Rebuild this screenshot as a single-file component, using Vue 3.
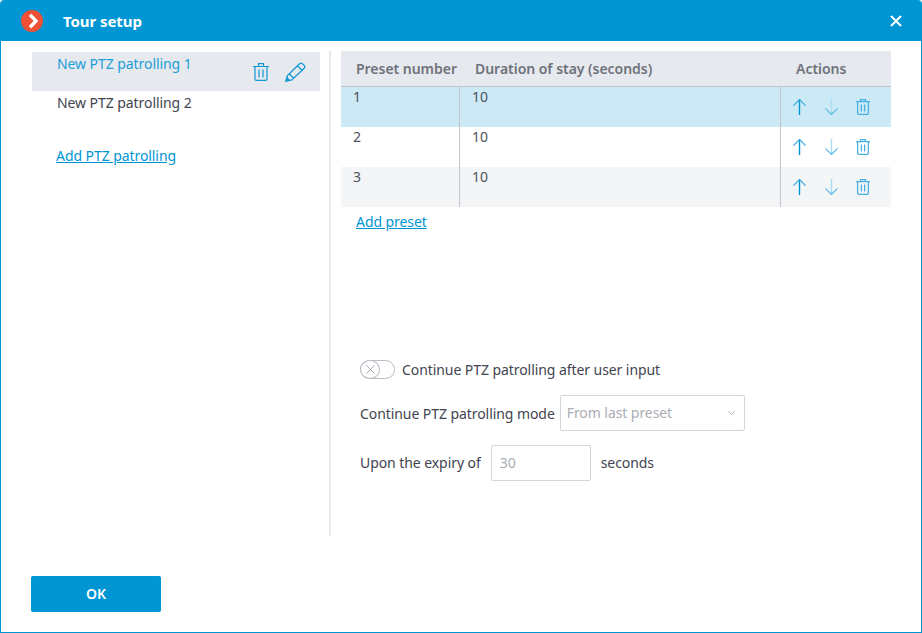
<template>
  <div class="dialog">
    <header class="titlebar">
      <span class="logo">
        <svg width="22" height="22" viewBox="0 0 22 22">
          <circle cx="11" cy="11" r="11" fill="#ee5033" />
          <path d="M9 4.8 L15 11 L9 17.2" fill="none" stroke="#fff" stroke-width="3.4" />
        </svg>
      </span>
      <span class="title">Tour setup</span>
      <svg class="close" width="12" height="12" viewBox="0 0 12 12">
        <path d="M1 1 L11 11 M11 1 L1 11" stroke="#fff" stroke-width="2" />
      </svg>
    </header>

    <div class="body">
      <aside class="left">
        <div
          v-for="(item, i) in tours"
          :key="item"
          class="tour"
          :class="{ selected: i === 0 }"
        >
          <span>{{ item }}</span>
          <div v-if="i === 0" class="tour-icons">
            <svg width="16" height="18" viewBox="0 0 16 18" fill="none" stroke="#1198d6" stroke-width="1.2">
              <path d="M0 3.5 H16 M5.5 3.5 V0.6 H10.5 V3.5 M2 3.5 V16 Q2 17.4 3.4 17.4 H12.6 Q14 17.4 14 16 V3.5 M6 6.5 V14.5 M10 6.5 V14.5" />
            </svg>
            <svg width="21" height="20" viewBox="0 0 21 20" fill="none" stroke="#1198d6" stroke-width="1.3">
              <path d="M0.8 19.3 L2.4 13.6 L14.6 1.7 Q16 0.6 17.4 1.7 L19.2 3.4 Q20.4 4.8 19.2 6.2 L6.8 18 Z M12.4 3.8 L17 8.4 M4.2 11.8 L8.6 16.2" />
              <path d="M0.8 19.3 L2 15 L5.4 18.2 Z" fill="#1198d6" stroke="none" />
            </svg>
          </div>
        </div>
        <a class="link add-tour">Add PTZ patrolling</a>
      </aside>

      <div class="divider"></div>

      <section class="right">
        <div class="grid head">
          <div class="hcell first">Preset number</div>
          <div class="hcell second">Duration of stay (seconds)</div>
          <div class="hcell third">Actions</div>
        </div>
        <div
          v-for="(row, i) in presets"
          :key="row.num"
          class="grid row"
          :class="rowClass(i)"
        >
          <div class="cell">{{ row.num }}</div>
          <div class="cell lined">{{ row.time }}</div>
          <div class="cell lined actions">
            <svg width="13" height="16" viewBox="0 0 13 16" fill="none">
              <path d="M6.5 0.5 V16" stroke="#0095d3" stroke-width="1.4" />
              <path d="M0.4 6.6 L6.5 0.5 L12.6 6.6" stroke="#3aa9de" stroke-width="1.2" />
            </svg>
            <svg width="13" height="16" viewBox="0 0 13 16" fill="none">
              <path d="M6.5 0 V15" stroke="#aadcf2" stroke-width="1.4" />
              <path d="M0.4 9.4 L6.5 15.5 L12.6 9.4" stroke="#5cbbe6" stroke-width="1.2" />
            </svg>
            <svg width="14" height="16" viewBox="0 0 14 16" fill="none" stroke="#48b1e1" stroke-width="1.3">
              <path d="M0 2.6 H14 M4.5 2.6 V0.6 H9.5 V2.6 M1.6 2.6 V14 Q1.6 15.4 3 15.4 H11 Q12.4 15.4 12.4 14 V2.6 M5.4 5.5 V12.5 M8.6 5.5 V12.5" />
            </svg>
          </div>
        </div>
        <a class="link add-preset">Add preset</a>

        <div class="options">
          <div class="opt-row switch-row">
            <span class="switch">
              <span class="knob">
                <svg width="9" height="9" viewBox="0 0 9 9">
                  <path d="M0.5 0.5 L8.5 8.5 M8.5 0.5 L0.5 8.5" stroke="#a3a7b1" stroke-width="1" />
                </svg>
              </span>
            </span>
            <span>Continue PTZ patrolling after user input</span>
          </div>
          <div class="opt-row">
            <span>Continue PTZ patrolling mode</span>
            <div class="select">
              <span class="select-text">From last preset</span>
              <svg width="7" height="4" viewBox="0 0 7 4">
                <path d="M0.3 0.3 L3.5 3.5 L6.7 0.3" fill="none" stroke="#b4b8bf" stroke-width="1" />
              </svg>
            </div>
          </div>
          <div class="opt-row expiry">
            <span class="nudge">Upon the expiry of</span>
            <div class="input">30</div>
            <span class="unit nudge">seconds</span>
          </div>
        </div>
      </section>
    </div>

    <footer class="footer">
      <button class="ok">OK</button>
    </footer>
  </div>
</template>

<script setup>
const tours = ['New PTZ patrolling 1', 'New PTZ patrolling 2']

const presets = [
  { num: 1, time: 10 },
  { num: 2, time: 10 },
  { num: 3, time: 10 }
]

const rowClass = (i) => {
  if (i === 0) return 'active'
  return i === 2 ? 'striped' : ''
}
</script>

<style>
html,
body {
  margin: 0;
  background: #fff;
}
</style>

<style scoped>
.dialog {
  width: 922px;
  height: 633px;
  box-sizing: border-box;
  display: flex;
  flex-direction: column;
  border: 1px solid #0095d3;
  border-top: none;
  border-radius: 4px 4px 0 0;
  background: #fff;
  overflow: hidden;
  font-family: "Noto Sans", "Open Sans", sans-serif;
  font-size: 14px;
  letter-spacing: -0.07px;
  color: #3f4450;
}

/* Title bar */
.titlebar {
  height: 41px;
  flex: none;
  display: flex;
  align-items: center;
  padding: 1px 19px 0 20px;
  box-sizing: border-box;
  background: #0095d3;
  color: #fff;
}

.logo {
  width: 22px;
  height: 22px;
  display: block;
}

.title {
  margin-left: 20px;
  font-weight: 700;
  font-size: 15px;
}

.close {
  margin-left: auto;
}

/* Main area */
.body {
  flex: 1;
  display: flex;
  align-items: flex-start;
  padding-top: 10px;
}

.left {
  width: 288px;
  margin: 1px 0 0 31px;
  display: flex;
  flex-direction: column;
}

.tour {
  height: 39px;
  box-sizing: border-box;
  padding: 1px 0 0 25px;
  display: flex;
  line-height: 22px;
}

.selected {
  background: #e6e9ee;
  color: #1c9fd8;
}

.tour-icons {
  margin-left: auto;
  display: flex;
  align-items: center;
  gap: 16px;
  padding: 0 14px 0 0;
  height: 38px;
}

.link {
  color: #0095d3;
  text-decoration: underline;
  line-height: 20px;
}

.add-tour {
  margin: 16px 0 0 24px;
}

.divider {
  width: 2px;
  height: 485px;
  flex: none;
  margin: 0 10px 0 9px;
  background: #e6e9ee;
}

.right {
  width: 550px;
  display: flex;
  flex-direction: column;
}

/* Table */
.grid {
  display: grid;
  grid-template-columns: 118px 321px 111px;
}

.head {
  height: 35px;
  background: #e6e9ee;
  border-bottom: 1px solid #c4c6cc;
}

.hcell {
  font-weight: 600;
  color: #6e727c;
  font-size: 14px;
  letter-spacing: -0.03px;
  line-height: 35px;
  white-space: nowrap;
}

.first {
  padding-left: 15px;
}

.second {
  padding-left: 16px;
}

.third {
  padding-left: 16px;
}

.row {
  height: 40px;
}

.active {
  background: #cce9f6;
}

.striped {
  background: #f4f5f7;
}

.cell {
  padding-left: 12px;
  line-height: 20px;
  color: #4d525d;
}

.lined {
  border-left: 1px solid #c4c6cc;
}

.actions {
  display: flex;
  align-items: flex-start;
  gap: 18.5px;
  padding: 12px 0 0 12px;
}

.add-preset {
  align-self: flex-start;
  margin: 5px 0 0 15px;
}

/* Options below the table */
.options {
  margin: 127px 0 0 19px;
  display: flex;
  flex-direction: column;
}

.opt-row {
  display: flex;
  align-items: center;
}

.switch-row {
  height: 20px;
  gap: 6px;
  margin-bottom: 16px;
}

.switch {
  width: 35px;
  height: 19px;
  margin-right: 1px;
  box-sizing: border-box;
  border: 1px solid #b9bcc4;
  border-radius: 10px;
  display: block;
}

.knob {
  width: 20px;
  height: 19px;
  box-sizing: border-box;
  margin: -1px 0 0 -1px;
  border: 1px solid #b9bcc4;
  border-radius: 50%;
  display: flex;
  align-items: center;
  justify-content: center;
  background: #fff;
}

.select {
  width: 185px;
  height: 36px;
  box-sizing: border-box;
  margin-left: 5px;
  padding: 0 9px 0 6px;
  border: 1px solid #d3d5da;
  border-radius: 2px;
  display: flex;
  align-items: center;
  justify-content: space-between;
  color: #a9adb5;
}

.select-text {
  padding-bottom: 2px;
}

.expiry {
  margin-top: 14px;
}

.nudge {
  padding-bottom: 2px;
}

.input {
  width: 100px;
  height: 36px;
  box-sizing: border-box;
  margin-left: 10px;
  padding-left: 8px;
  border: 1px solid #d3d5da;
  border-radius: 2px;
  line-height: 34px;
  color: #a9adb5;
}

.unit {
  margin-left: 10px;
}

/* Footer */
.footer {
  flex: none;
  height: 56px;
  padding-left: 30px;
}

.ok {
  width: 130px;
  height: 36px;
  display: block;
  padding: 0 0 2px;
  border: none;
  border-radius: 2px;
  background: #0095d3;
  color: #fff;
  font-family: inherit;
  font-size: 14px;
  font-weight: 600;
}
</style>
